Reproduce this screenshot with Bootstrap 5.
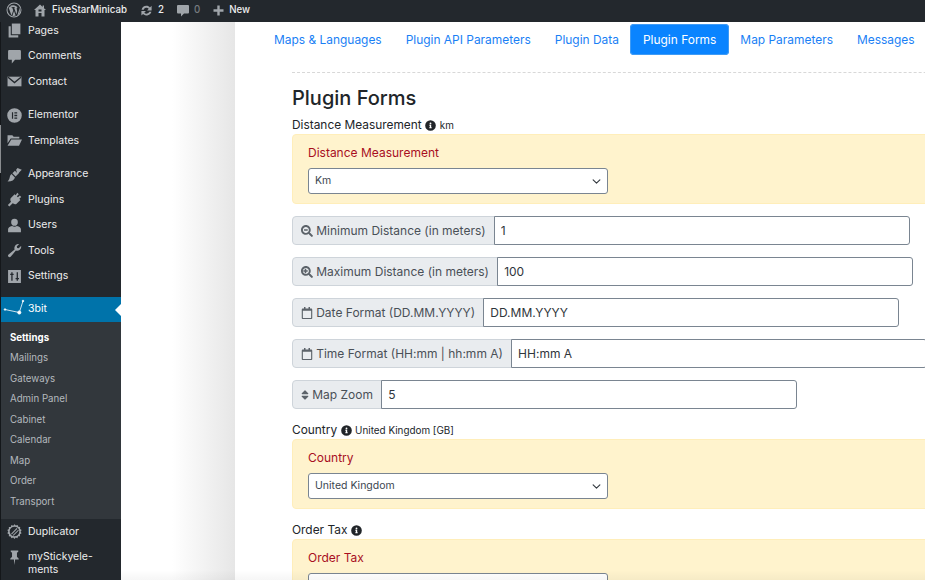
<!DOCTYPE html>
<html lang="en">
<head>
    <meta charset="UTF-8">
    <meta name="viewport" content="width=device-width, initial-scale=1.0">
    <title>Plugin Forms</title>
    <link rel="stylesheet" href="https://cdn.jsdelivr.net/npm/bootstrap@5.3.0/dist/css/bootstrap.min.css">
    <style>
        html, body { height: 580px; overflow: hidden; }
        body { font-family: Inter, "Liberation Sans", sans-serif; font-size: 12px; color: #23282d; background: #fff; }
        svg { fill: currentColor; flex: none; }

        /* admin bar */
        .wp-bar { height: 22px; padding-bottom: 2px; background: #23282d; color: #eee; font-size: 9.7px; font-weight: 500; }
        .wp-bar svg { color: #a0a5aa; }
        .wp-logo { margin-left: 6px; }
        .wp-home { margin-left: 12px; margin-right: 6px; }
        .wp-icon-gap { margin-left: 13px; margin-right: 5px; }
        .wp-muted { color: #777c80; }

        /* side menu */
        .wp-shell { height: 558px; position: relative; }
        .wp-shell::before { content: ""; position: absolute; left: 0; top: 103px; width: 1px; height: 48px; background: #8a8d90; z-index: 2; }
        .wp-shell::after { content: ""; position: absolute; left: 121px; right: 0; bottom: 0; height: 10px; background: linear-gradient(rgba(0,0,0,0), rgba(0,0,0,.035)); pointer-events: none; }
        .wp-side { width: 121px; background: #23282d; border-left: 1px solid #14171a; color: #eee; font-size: 10.5px; overflow: hidden; flex: none; }
        .wp-list { margin-top: -4px; }
        .wp-item { height: 25.5px; padding-left: 6px; gap: 6px; }
        .wp-item svg { color: #a0a5aa; width: 15px; height: 15px; }
        .wp-sep { margin-top: 8px; }
        .wp-current { height: 24.5px; background: #0073aa; color: #fff; position: relative; margin-top: 8px; padding-left: 2px; gap: 3px; }
        .wp-current svg { color: #fff; width: 22px; height: 22px; }
        .wp-current::after { content: ""; position: absolute; right: 0; top: 7px; border: 6px solid transparent; border-right-color: #fff; border-left-width: 0; }
        .wp-sub { background: #32373c; padding: 6px 0 7px 9px; color: #b4b9be; font-size: 9.7px; }
        .wp-sub div { height: 20.5px; line-height: 20.5px; }
        .wp-sub .wp-on { color: #fff; font-weight: 700; }
        .wp-tall { height: 40px; align-items: flex-start; padding-top: 5px; line-height: 13px; }

        /* page */
        .pg-main { flex: 1 1 auto; min-width: 0; overflow: hidden; }
        .pg-gutter { width: 114px; flex: none; background: linear-gradient(to right, #fff 45%, #e6e6e6); }
        .pg-panel { flex: 1 1 auto; min-width: 0; padding-left: 57px; overflow: hidden; }
        .pg-inner { width: 760px; }

        .pg-tabs { flex-wrap: nowrap; margin-left: -30px; padding-top: 2px; height: 50px; white-space: nowrap; }
        .pg-tabs .nav-link { font-size: 11.94px; padding: 0 12px; height: 31px; line-height: 31px; color: #1a7ff5; border-radius: 4px; }
        .pg-tabs .nav-link.active { background: #0a84ff; color: #fff; padding: 0 13px; margin: 0 -1px; box-shadow: 0 0 0 1px #3f9bf5 inset; }
        .pg-rule { border-top: 1px dashed #d8d8d8; height: 0; }
        .pg-title { font-size: 20px; font-weight: 500; margin: 0; padding-top: 13px; line-height: 25px; color: #212529; }
        .fld-label { font-size: 11.9px; line-height: 16px; padding-top: 1px; color: #212529; gap: 3.5px; }
        .fld-label svg { width: 11px; height: 11px; }
        .fld-label small { font-size: 9.9px; }
        .fld-top { margin-top: 5px; }
        .fld-box { background: #fff3cd; border: 1px solid #ffeeba; border-radius: 4px; padding: 10px 15px; height: 70px; margin-top: 1px; margin-bottom: 12px; }
        .fld-cap { color: #a80f1f; font-size: 12px; line-height: 16px; margin-bottom: 7px; }
        .fld-select { width: 300px; height: 26px; min-height: 0; padding: 0 24px 0 6px; font-size: 10.5px; border-color: #7a8591; border-radius: 3px; color: #3c4650; background-position: right 5px center; background-size: 11px 9px; }
        .fld-group { width: auto; flex-wrap: nowrap; margin-bottom: 12px; }
        .fld-group .input-group-text { height: 29px; font-size: 12px; padding: 0 8.2px; gap: 3px; background: #e9ecef; color: #495057; border-color: #ced4da; border-radius: 4px 0 0 4px; }
        .fld-group .input-group-text svg { width: 12px; height: 12px; color: #5c636a; }
        .fld-group .input-group-text .pg-sort { width: 8px; }
        .fld-group .form-control { flex: none; width: 416px; height: 29px; min-height: 0; font-size: 12px; padding: 0 6px; border-color: #7a8591; color: #2f353b; border-radius: 0 3px 3px 0; }
    </style>
</head>
<body>
    <!-- top bar -->
    <div class="wp-bar d-flex align-items-center">
        <svg class="wp-logo" width="16" height="16" viewBox="0 0 16 16"><path fill-rule="evenodd" d="M8 .5a7.5 7.5 0 1 0 0 15 7.5 7.5 0 0 0 0-15zm0 1a6.500 6.500 0 1 1 0 13 6.500 6.500 0 0 1 0-13zM2.600 5.600l2.900 7.800 1.700-5-1-2.800h-.8v-.6h3.600v.6h-.9l2.200 6.600.7-2.200c.4-1.400-.3-2.600-.3-3.300 0-.6.4-1.100 1-1.100A5.700 5.700 0 0 0 3.400 4.500h2zM8 9l-1.600 4.700c1 .3 2.200.3 3.200-.1zM13 5.300c.4 1.200.2 2.600-.2 3.800l-1.500 4.300A6 6 0 0 0 13 5.300z"/></svg>
        <svg class="wp-home" width="12" height="13" viewBox="0 0 12 13"><path fill-rule="evenodd" d="M6 .5 0 6h1.500v6.500h3V9h3v3.500h3V6H12L10 4.200V1.500H8.600v1.400zM4.500 5.500h3v2h-3z"/></svg>
        <span>FiveStarMinicab</span>
        <svg class="wp-icon-gap" width="13" height="13" viewBox="0 0 14 14"><path d="M7 2c1.500 0 2.800.6 3.700 1.700L12.500 2v5H7.600l1.800-1.800A3.200 3.200 0 0 0 4 6.200H1.700A5.400 5.400 0 0 1 7 2zM1.500 7.500h4.900L4.600 9.300a3.200 3.200 0 0 0 5.400-1h2.300a5.400 5.400 0 0 1-9 2.400L1.500 12.400z"/></svg>
        <span>2</span>
        <svg class="wp-icon-gap" width="12" height="13" viewBox="0 0 12 13"><path d="M1 1h10a1 1 0 0 1 1 1v6.500a1 1 0 0 1-1 1H7L4 12.500v-3H1a1 1 0 0 1-1-1V2a1 1 0 0 1 1-1z"/></svg>
        <span class="wp-muted">0</span>
        <svg class="wp-icon-gap" width="11" height="11" viewBox="0 0 11 11"><path d="M4.300.5h2.400v3.800h3.800v2.400H6.700v3.800H4.300V6.700H.5V4.300h3.800z"/></svg>
        <span>New</span>
    </div>

    <div class="wp-shell d-flex">
        <!-- side menu -->
        <div class="wp-side">
            <div class="wp-list">
                <div class="wp-item d-flex align-items-center"><svg viewBox="0 0 14 14"><path d="M4.500 .5h8v10h-8z"/><path d="M1.500 3h2v8.500h7v2h-9z"/></svg>Pages</div>
                <div class="wp-item d-flex align-items-center"><svg viewBox="0 0 14 14"><path d="M2 1h10a1 1 0 0 1 1 1v7a1 1 0 0 1-1 1H7.500l-3 3.500V10H2a1 1 0 0 1-1-1V2a1 1 0 0 1 1-1z"/></svg>Comments</div>
                <div class="wp-item d-flex align-items-center"><svg viewBox="0 0 14 14"><path d="M.5 2.500h13v9H.5z"/><path d="M1 3 7 8l6-5" fill="none" stroke="#23282d" stroke-width="1.200"/></svg>Contact</div>
                <div class="wp-item wp-sep d-flex align-items-center"><svg viewBox="0 0 14 14"><path fill-rule="evenodd" d="M7 .2a6.800 6.800 0 1 0 0 13.600A6.800 6.800 0 0 0 7 .2zM4.600 4h1.100v6H4.600zM6.900 4h2.600v1.200H6.900zm0 2.400h2.600v1.200H6.900zm0 2.400h2.600V10H6.900z"/></svg>Elementor</div>
                <div class="wp-item d-flex align-items-center"><svg viewBox="0 0 14 14"><path d="M.5 2h4.500l1.200 1.500h5.300v1.700H3.500L.5 9.500zM4 6h10l-2.800 6H.5z"/></svg>Templates</div>
                <div class="wp-item wp-sep d-flex align-items-center"><svg viewBox="0 0 14 14"><path d="M8.500 2.500 9.800 1l4 1.500-2.300 2.300-.6 1.300-1.100 1zM7.400 3.500l3 3-2.400 2.400-3-3zM4.200 6.500l3.200 3.200c-.4 2.200-2.700 3.700-6.900 3.800 1.300-1 1.700-2.500 2-3.600.3-1.400.6-2.600 1.700-3.400z"/></svg>Appearance</div>
                <div class="wp-item d-flex align-items-center"><svg viewBox="0 0 14 14"><path d="M9.600.8 11 2.200 9.200 4l1 1 1.800-1.800 1.300 1.400-1.800 1.800 1 1-3.800 3.700c-1.200.5-2.500.2-3.400-.5L2.200 13.600.8 12.200l3-3c-.7-1-.9-2.200-.4-3.400L7.100 2l1 1z"/></svg>Plugins</div>
                <div class="wp-item d-flex align-items-center"><svg viewBox="0 0 14 14"><path d="M7 .8a3.100 3.100 0 0 1 3.100 3.300c0 1.600-1 3.200-3.100 3.200S3.900 5.700 3.900 4.100A3.100 3.100 0 0 1 7 .8zM4.700 7.400c1.300 1 3.300 1 4.600 0 2.300.5 3.700 1.600 3.700 3.200v2.600H1v-2.600c0-1.600 1.400-2.700 3.700-3.200z"/></svg>Users</div>
                <div class="wp-item d-flex align-items-center"><svg viewBox="0 0 14 14"><path d="M13.300 3.500a3.700 3.700 0 0 1-5 3.500l-4.700 5.700c-.6.700-1.500.8-2.200.2s-.6-1.500.1-2.100L7.100 6c-.7-2 .3-4.200 2.400-4.900.6-.2 1.200-.2 1.800-.1L9.100 3.200l.4 1.400 1.400.4 2.200-2.200z"/></svg>Tools</div>
                <div class="wp-item d-flex align-items-center"><svg viewBox="0 0 14 14"><path fill-rule="evenodd" d="M1 1h12v12H1zM3 4.500v1h1V11h1.200V5.500h1v-1h-1V3H4v1.500zm5 4v1h1V11h1.200V9.500h1v-1h-1V3H9v5.500z"/></svg>Settings</div>
                <div class="wp-item wp-current d-flex align-items-center"><svg viewBox="0 0 22 22"><g stroke="#fff" stroke-width=".8" fill="#fff"><path d="M2 11.500 16.300 14.500 20 3" fill="none"/><circle cx="2" cy="11.500" r=".8"/><circle cx="16.300" cy="14.500" r="1.600"/><circle cx="20" cy="3" r=".8"/></g></svg><span>3bit</span></div>
                <div class="wp-sub">
                    <div class="wp-on">Settings</div>
                    <div>Mailings</div>
                    <div>Gateways</div>
                    <div>Admin Panel</div>
                    <div>Cabinet</div>
                    <div>Calendar</div>
                    <div>Map</div>
                    <div>Order</div>
                    <div>Transport</div>
                </div>
                <div class="wp-item d-flex align-items-center"><svg viewBox="0 0 14 14"><path fill-rule="evenodd" d="M7 .2l1.200 1.300 1.700-.6.600 1.700 1.800.2-.1 1.800 1.500 1-1 1.500.9 1.600-1.500.9.100 1.800-1.800.1-.7 1.700-1.600-.7L7 13.900l-1.200-1.300-1.700.7-.6-1.700-1.800-.2.100-1.800L.3 8.600l.9-1.500-.9-1.500 1.500-1-.1-1.800 1.800-.1.600-1.700 1.700.6zm0 2.300A4.500 4.500 0 1 0 7 11.500 4.500 4.500 0 0 0 7 2.500zM3.800 9 9 3.800l.8.6-5.300 5.300zm1.500 1.500 5.200-5.200.5.800-4.900 4.900z"/></svg>Duplicator</div>
                <div class="wp-item wp-tall d-flex"><svg viewBox="0 0 14 14"><path d="M3.500.5h7v1.200L9.300 2.500v4c1 .5 1.700 1.200 1.700 2.300H7.600L7 14l-.6-5.200H3c0-1.100.7-1.800 1.700-2.300v-4L3.500 1.700z"/></svg><span>myStickyele-<br>ments</span></div>
            </div>
        </div>

        <div class="pg-main d-flex">
            <div class="pg-gutter"></div>
            <div class="pg-panel">
                <div class="pg-inner">
                    <ul class="nav nav-pills pg-tabs">
                        <li class="nav-item"><a class="nav-link" href="#">Maps &amp; Languages</a></li>
                        <li class="nav-item"><a class="nav-link" href="#">Plugin API Parameters</a></li>
                        <li class="nav-item"><a class="nav-link" href="#">Plugin Data</a></li>
                        <li class="nav-item"><a class="nav-link active" href="#">Plugin Forms</a></li>
                        <li class="nav-item"><a class="nav-link" href="#">Map Parameters</a></li>
                        <li class="nav-item"><a class="nav-link" href="#">Messages</a></li>
                    </ul>
                    <div class="pg-rule"></div>
                    <h2 class="pg-title">Plugin Forms</h2>

                    <div class="fld-label fld-top d-flex align-items-center">Distance Measurement
                        <svg viewBox="0 0 512 512"><path d="M256 8a248 248 0 1 0 0 496 248 248 0 0 0 0-496zm0 110a42 42 0 1 1 0 84 42 42 0 0 1 0-84zm56 254c0 7-5 12-12 12h-88c-7 0-12-5-12-12v-24c0-7 5-12 12-12h12v-64h-12c-7 0-12-5-12-12v-24c0-7 5-12 12-12h64c7 0 12 5 12 12v100h12c7 0 12 5 12 12z"/></svg>
                        <small>km</small></div>
                    <div class="fld-box">
                        <div class="fld-cap">Distance Measurement</div>
                        <select class="form-select fld-select"><option>Km</option></select>
                    </div>

                    <div class="input-group fld-group">
                        <span class="input-group-text"><svg viewBox="0 0 512 512"><path d="M505 442.700 405.300 343c-4.500-4.500-10.600-7-17-7H372c27.600-35.300 44-79.700 44-128C416 93.100 322.900 0 208 0S0 93.100 0 208s93.100 208 208 208c48.300 0 92.700-16.400 128-44v16.300c0 6.400 2.500 12.500 7 17l99.700 99.700c9.400 9.400 24.600 9.400 33.900 0l28.300-28.300c9.400-9.400 9.400-24.600.1-34zM208 336c-70.700 0-128-57.200-128-128 0-70.700 57.200-128 128-128 70.700 0 128 57.200 128 128 0 70.700-57.200 128-128 128zm80-148v40c0 6.600-5.400 12-12 12H140c-6.600 0-12-5.400-12-12v-40c0-6.600 5.400-12 12-12h136c6.600 0 12 5.400 12 12z"/></svg>Minimum Distance (in meters)</span>
                        <input class="form-control" type="text" value="1">
                    </div>
                    <div class="input-group fld-group">
                        <span class="input-group-text"><svg viewBox="0 0 512 512"><path d="M505 442.700 405.300 343c-4.500-4.500-10.600-7-17-7H372c27.600-35.300 44-79.700 44-128C416 93.100 322.900 0 208 0S0 93.100 0 208s93.100 208 208 208c48.300 0 92.700-16.400 128-44v16.300c0 6.400 2.500 12.500 7 17l99.700 99.700c9.400 9.400 24.600 9.400 33.900 0l28.300-28.300c9.400-9.400 9.400-24.600.1-34zM208 336c-70.700 0-128-57.200-128-128 0-70.700 57.200-128 128-128 70.700 0 128 57.200 128 128 0 70.700-57.200 128-128 128zm80-148v40c0 6.600-5.400 12-12 12h-52v52c0 6.600-5.400 12-12 12h-40c-6.600 0-12-5.400-12-12v-52h-52c-6.600 0-12-5.400-12-12v-40c0-6.600 5.400-12 12-12h52v-52c0-6.600 5.400-12 12-12h40c6.600 0 12 5.400 12 12v52h52c6.600 0 12 5.400 12 12z"/></svg>Maximum Distance (in meters)</span>
                        <input class="form-control" type="text" value="100">
                    </div>
                    <div class="input-group fld-group">
                        <span class="input-group-text"><svg viewBox="0 0 448 512"><path d="M400 64h-48V12c0-6.600-5.400-12-12-12h-40c-6.600 0-12 5.400-12 12v52H160V12c0-6.600-5.400-12-12-12h-40c-6.600 0-12 5.400-12 12v52H48C21.500 64 0 85.500 0 112v352c0 26.500 21.500 48 48 48h352c26.500 0 48-21.500 48-48V112c0-26.500-21.500-48-48-48zm-6 400H54c-3.300 0-6-2.700-6-6V160h352v298c0 3.300-2.700 6-6 6z"/></svg>Date Format (DD.MM.YYYY)</span>
                        <input class="form-control" type="text" value="DD.MM.YYYY">
                    </div>
                    <div class="input-group fld-group">
                        <span class="input-group-text"><svg viewBox="0 0 448 512"><path d="M400 64h-48V12c0-6.600-5.400-12-12-12h-40c-6.600 0-12 5.400-12 12v52H160V12c0-6.600-5.400-12-12-12h-40c-6.600 0-12 5.400-12 12v52H48C21.500 64 0 85.500 0 112v352c0 26.500 21.500 48 48 48h352c26.500 0 48-21.500 48-48V112c0-26.500-21.500-48-48-48zm-6 400H54c-3.300 0-6-2.700-6-6V160h352v298c0 3.300-2.700 6-6 6z"/></svg>Time Format (HH:mm | hh:mm A)</span>
                        <input class="form-control" type="text" value="HH:mm A">
                    </div>
                    <div class="input-group fld-group">
                        <span class="input-group-text"><svg class="pg-sort" viewBox="0 0 320 512"><path d="M41 288h238c21.400 0 32.100 25.900 17 41L177 448c-9.400 9.400-24.600 9.400-33.900 0L24 329c-15.100-15.100-4.400-41 17-41zm255-105L177 64c-9.400-9.400-24.600-9.400-33.900 0L24 183c-15.100 15.100-4.400 41 17 41h238c21.400 0 32.100-25.900 17-41z"/></svg>Map Zoom</span>
                        <input class="form-control" type="text" value="5">
                    </div>

                    <div class="fld-label d-flex align-items-center">Country
                        <svg viewBox="0 0 512 512"><path d="M256 8a248 248 0 1 0 0 496 248 248 0 0 0 0-496zm0 110a42 42 0 1 1 0 84 42 42 0 0 1 0-84zm56 254c0 7-5 12-12 12h-88c-7 0-12-5-12-12v-24c0-7 5-12 12-12h12v-64h-12c-7 0-12-5-12-12v-24c0-7 5-12 12-12h64c7 0 12 5 12 12v100h12c7 0 12 5 12 12z"/></svg>
                        <small>United Kingdom [GB]</small></div>
                    <div class="fld-box">
                        <div class="fld-cap">Country</div>
                        <select class="form-select fld-select"><option>United Kingdom</option></select>
                    </div>

                    <div class="fld-label d-flex align-items-center">Order Tax
                        <svg viewBox="0 0 512 512"><path d="M256 8a248 248 0 1 0 0 496 248 248 0 0 0 0-496zm0 110a42 42 0 1 1 0 84 42 42 0 0 1 0-84zm56 254c0 7-5 12-12 12h-88c-7 0-12-5-12-12v-24c0-7 5-12 12-12h12v-64h-12c-7 0-12-5-12-12v-24c0-7 5-12 12-12h64c7 0 12 5 12 12v100h12c7 0 12 5 12 12z"/></svg>
                    </div>
                    <div class="fld-box">
                        <div class="fld-cap">Order Tax</div>
                        <select class="form-select fld-select"><option></option></select>
                    </div>
                </div>
            </div>
        </div>
    </div>
    <script src="https://cdn.jsdelivr.net/npm/bootstrap@5.3.0/dist/js/bootstrap.bundle.min.js"></script>
</body>
</html>
